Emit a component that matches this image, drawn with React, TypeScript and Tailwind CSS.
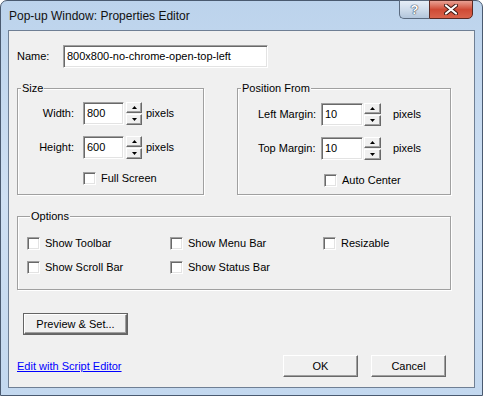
import React from "react";

const sunken =
  "bg-white border border-t-[#a0a0a0] border-l-[#a0a0a0] border-r-white border-b-white shadow-[inset_1px_1px_0_#696969,inset_-1px_-1px_0_#e3e3e3]";
const raised =
  "bg-[#f0f0f0] border border-t-white border-l-white border-r-[#696969] border-b-[#696969] shadow-[inset_-1px_-1px_0_#a0a0a0]";

function Field({ value, w }: { value: string; w: string }) {
  return (
    <div className={`${sunken} ${w} h-[23px] flex items-center pl-[3px] text-[11px] leading-none`}>
      {value}
    </div>
  );
}

function Arrow({ down }: { down?: boolean }) {
  return (
    <svg width="5" height="3" viewBox="0 0 5 3">
      <polygon points={down ? "0,0 5,0 2.5,3" : "2.5,0 5,3 0,3"} fill="#000" />
    </svg>
  );
}

function Spin({ w }: { w: string }) {
  return (
    <div className={`flex flex-col gap-[1px] ${w}`}>
      <div className={`${raised} h-[11px] flex items-center justify-center`}>
        <Arrow />
      </div>
      <div className={`${raised} h-[11px] flex items-center justify-center`}>
        <Arrow down />
      </div>
    </div>
  );
}

function Check({ label }: { label: string }) {
  return (
    <div className="flex items-center h-[13px]">
      <div className={`${sunken} w-[13px] h-[13px]`} />
      <span className="ml-[5px]">{label}</span>
    </div>
  );
}

function Button({ label, w, isDefault }: { label: string; w: string; isDefault?: boolean }) {
  if (isDefault) {
    return (
      <div className={`${w} h-[22px] border border-[#646464] flex`}>
        <div className={`${raised} flex-1 flex items-center justify-center`}>{label}</div>
      </div>
    );
  }
  return <div className={`${raised} ${w} h-[22px] flex items-center justify-center`}>{label}</div>;
}

function Group({ title, className, children }: { title: string; className: string; children: React.ReactNode }) {
  return (
    <fieldset
      className={`border border-[#a0a0a0] shadow-[1px_1px_0_#fff,inset_1px_1px_0_#fff] ${className}`}
    >
      <legend className="ml-[3px] px-[1px] leading-[13px] bg-[#f0f0f0]">{title}</legend>
      {children}
    </fieldset>
  );
}

export default function App() {
  return (
    <div className="w-[483px] h-[396px] font-['Liberation_Sans',Arial,sans-serif] text-[11px] leading-[13px] text-black">
      <div className="w-full h-full flex flex-col border border-[#4a5a70] rounded-t-[7px] bg-gradient-to-b from-[#bcd3ec] via-[#cfe0f3] to-[#c3d8ef] px-[7px] pb-[7px]">
        {/* title bar */}
        <div className="h-[29px] flex items-start">
          <div className="mt-[8px] pl-[1px] text-[12px] leading-[15px] text-[#111]">
            Pop-up Window: Properties Editor
          </div>
          <div className="ml-auto mr-[2px] -mt-[1px] flex">
            <div className="w-[30px] h-[19px] border border-[#5b6b80] border-r-0 rounded-bl-[5px] bg-gradient-to-b from-[#e6eef7] via-[#cfdceb] to-[#b3c6dc] flex items-center justify-center">
              <span className="text-[13px] font-bold leading-none text-white [text-shadow:0_0_1px_#3a4656,0_0_1px_#3a4656,0_0_1px_#3a4656]">
                ?
              </span>
            </div>
            <div className="w-[44px] h-[19px] border border-[#5b2a24] rounded-br-[5px] bg-gradient-to-b from-[#e8a093] via-[#cf4a35] to-[#d9634c] flex items-center justify-center">
              <svg width="14" height="11" viewBox="0 0 14 11">
                <path d="M2 1.5 L12 9.5 M12 1.5 L2 9.5" stroke="#3d1712" strokeWidth="4" strokeLinecap="round" />
                <path d="M2 1.5 L12 9.5 M12 1.5 L2 9.5" stroke="#fff" strokeWidth="2.2" strokeLinecap="round" />
              </svg>
            </div>
          </div>
        </div>

        {/* client area */}
        <div className="flex-1 border border-[#6f7f94] bg-[#f0f0f0] flex flex-col pl-[8px] pt-[14px]">
          <div className="flex items-center">
            <span className="w-[46px]">Name:</span>
            <Field value="800x800-no-chrome-open-top-left" w="w-[205px]" />
          </div>

          <div className="flex mt-[14px]">
            <Group title="Size" className="w-[187px] h-[113px] pt-[7px]">
              <div className="flex items-center">
                <span className="w-[56px] text-right">Width:</span>
                <div className="ml-[9px]">
                  <Field value="800" w="w-[41px]" />
                </div>
                <div className="ml-[2px]">
                  <Spin w="w-[16px]" />
                </div>
                <span className="ml-[4px]">pixels</span>
              </div>
              <div className="flex items-center mt-[11px]">
                <span className="w-[56px] text-right">Height:</span>
                <div className="ml-[9px]">
                  <Field value="600" w="w-[41px]" />
                </div>
                <div className="ml-[2px]">
                  <Spin w="w-[16px]" />
                </div>
                <span className="ml-[4px]">pixels</span>
              </div>
              <div className="mt-[13px] pl-[65px]">
                <Check label="Full Screen" />
              </div>
            </Group>

            <Group title="Position From" className="ml-[33px] w-[214px] h-[113px] pt-[8px]">
              <div className="flex items-center pl-[20px]">
                <span className="w-[63px]">Left Margin:</span>
                <Field value="10" w="w-[42px]" />
                <div className="ml-[1px]">
                  <Spin w="w-[17px]" />
                </div>
                <span className="ml-[12px]">pixels</span>
              </div>
              <div className="flex items-center pl-[20px] mt-[11px]">
                <span className="w-[63px]">Top Margin:</span>
                <Field value="10" w="w-[42px]" />
                <div className="ml-[1px]">
                  <Spin w="w-[17px]" />
                </div>
                <span className="ml-[12px]">pixels</span>
              </div>
              <div className="mt-[14px] pl-[86px]">
                <Check label="Auto Center" />
              </div>
            </Group>
          </div>

          <Group title="Options" className="mt-[15px] w-[434px] h-[80px] pt-[14px] pl-[9px]">
            <div className="grid grid-cols-[143px_153px_auto] gap-y-[11px]">
              <Check label="Show Toolbar" />
              <Check label="Show Menu Bar" />
              <Check label="Resizable" />
              <Check label="Show Scroll Bar" />
              <Check label="Show Status Bar" />
            </div>
          </Group>

          <div className="mt-[23px] ml-[6px]">
            <Button label="Preview & Set..." w="w-[105px]" isDefault />
          </div>

          <div className="flex items-center mt-[20px] mr-[28px]">
            <span className="text-[#0000ff] underline">Edit with Script Editor</span>
            <div className="ml-auto">
              <Button label="OK" w="w-[75px]" />
            </div>
            <div className="ml-[13px]">
              <Button label="Cancel" w="w-[75px]" />
            </div>
          </div>
        </div>
      </div>
    </div>
  );
}
